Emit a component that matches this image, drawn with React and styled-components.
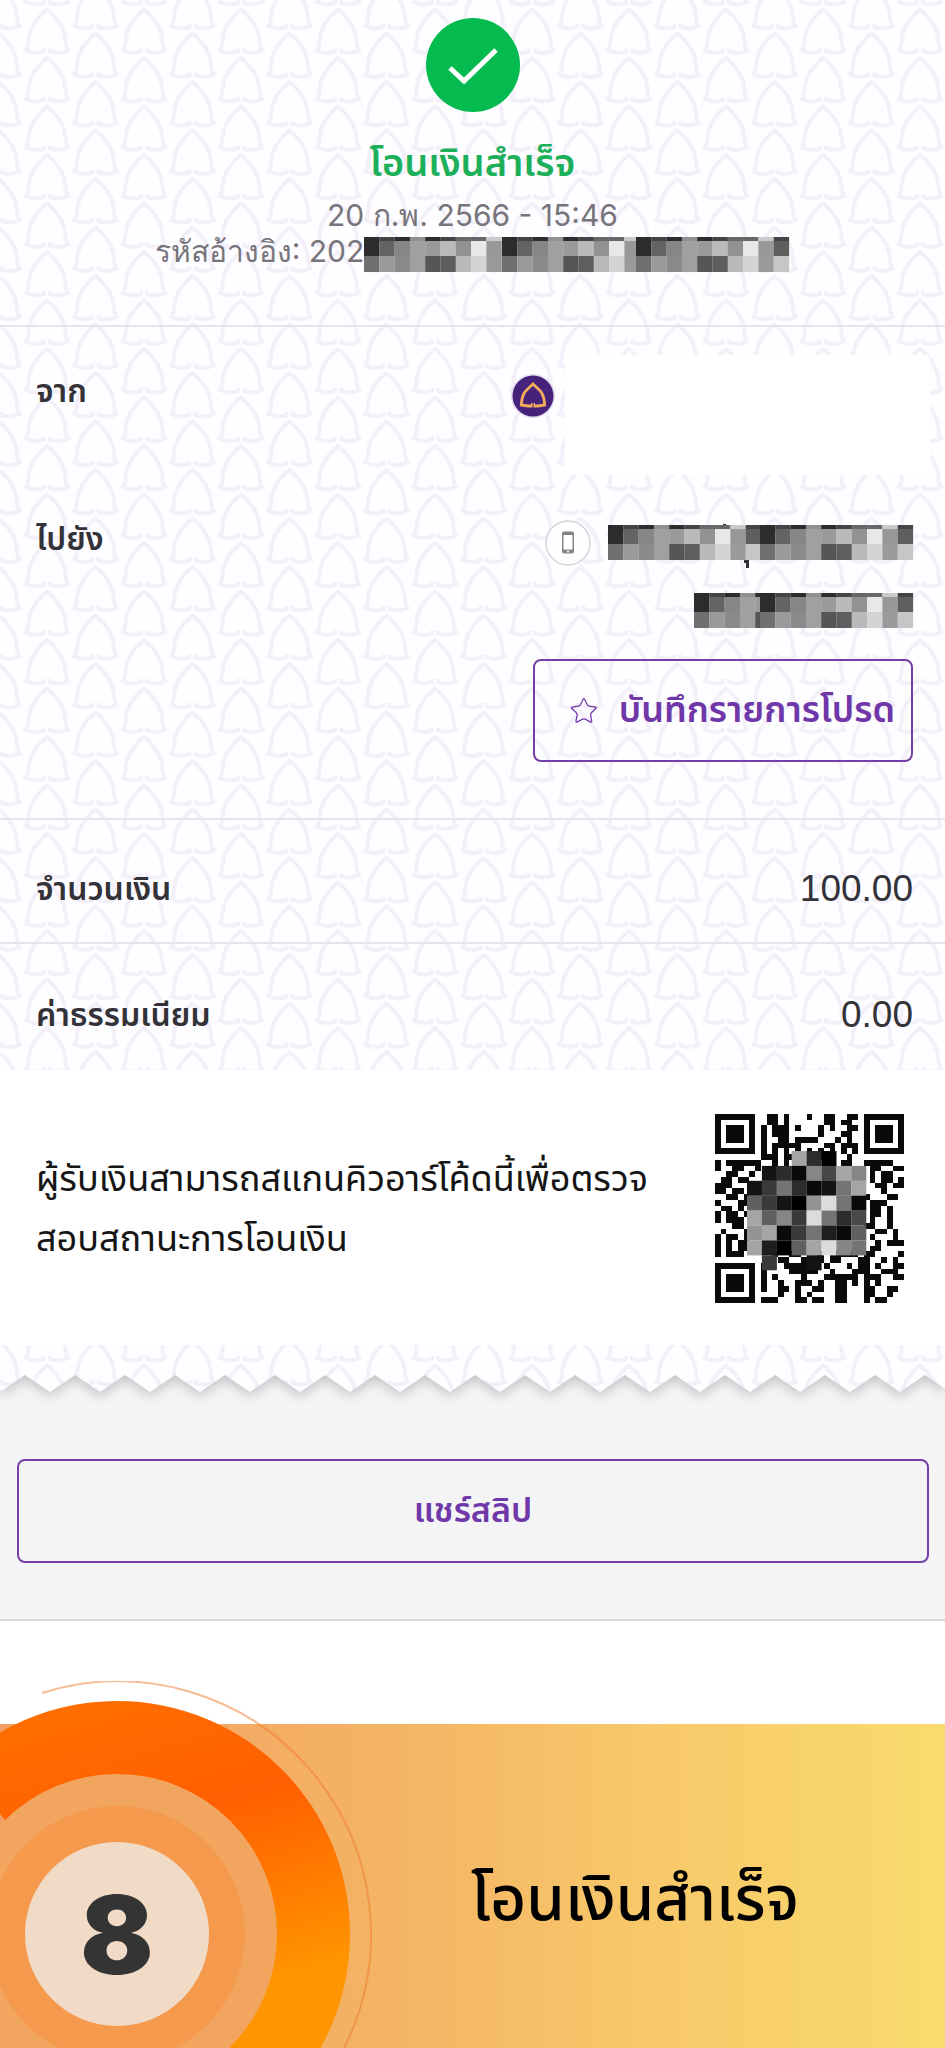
import React from "react";
import styled, { createGlobalStyle } from "styled-components";
import { Star } from "lucide-react";

const MOSAIC_TOP = ["#2c", "#44", "#2c", "#90", "#2c", "#44", "#68", "#68", "#ca", "#44"];
const MOSAIC_MID = ["#2c", "#64", "#86", "#a0", "#9a", "#ba", "#92", "#e8", "#98", "#5e"];
const MOSAIC_LOW = ["#70", "#9a", "#8a", "#a0", "#56", "#5e", "#ba", "#d4", "#9a", "#c6"];

const QR_ROWS = [
  "111111100110100010011001101111111",
  "100000100110100000011011001000001",
  "101110101011101000101001101011101",
  "101110101011100000100011001011101",
  "101110101001101111000101001011101",
  "100000101011111000011011101000001",
  "111111101010101010101010101111111",
  "000000001110110000100001000000000",
  "101111110010100000000011001111100",
  "100110010000000000000000000110011",
  "001100100000000000000000000101100",
  "011011000000000000000000000101101",
  "111000000000000000000000000011011",
  "110110000000000000000000000001000",
  "001101000000000000000000001000110",
  "100011000000000000000000000111000",
  "011010000000000000000000000110100",
  "101101000000000000000000000110100",
  "101110000000000000000000000100100",
  "000110000000000000000000001100100",
  "010001000000000000000000000011010",
  "101101100000000000000000000100010",
  "101011000000000000000000000010111",
  "101011010000000000000000000110000",
  "101110000010011000101111101100001",
  "000000000001100111101100011001010",
  "111111101000111100010001011010011",
  "100000101000011111001000111001110",
  "101110101010000100011111101110011",
  "101110101001001110100110101010000",
  "101110101001101001100110001100110",
  "100000100001001010000110001100100",
  "111111101110001101100110001011000",
];

const QR_COVER = [
  [3, 0, "#a5"], [4, 0, "#2c"], [5, 0, "#00"],
  [1, 1, "#14"], [2, 1, "#2c"], [3, 1, "#0a"], [4, 1, "#86"], [5, 1, "#48"], [6, 1, "#a5"], [7, 1, "#86"],
  [0, 2, "#14"], [1, 2, "#3a"], [2, 2, "#74"], [3, 2, "#2c"], [4, 2, "#0a"], [5, 2, "#14"], [6, 2, "#74"], [7, 2, "#a5"],
  [0, 3, "#60"], [1, 3, "#3a"], [2, 3, "#14"], [3, 3, "#00"], [4, 3, "#94"], [5, 3, "#dc"], [6, 3, "#74"], [7, 3, "#0a"],
  [0, 4, "#a5"], [1, 4, "#60"], [2, 4, "#86"], [3, 4, "#3a"], [4, 4, "#dc"], [5, 4, "#74"], [6, 4, "#2c"], [7, 4, "#4a"],
  [0, 5, "#94"], [1, 5, "#a5"], [2, 5, "#0a"], [3, 5, "#3a"], [4, 5, "#74"], [5, 5, "#1e"], [6, 5, "#0a"], [7, 5, "#60"],
  [0, 6, "#a5"], [1, 6, "#1e"], [2, 6, "#00"], [3, 6, "#60"], [4, 6, "#a5"], [5, 6, "#dc"], [6, 6, "#86"], [7, 6, "#74"],
  [1, 7, "#3a"], [4, 7, "#14"],
];

const grey = (shade) => shade + shade.slice(1) + shade.slice(1);

const Mosaic = ({ width, runs, label, mark }) => {
  return (
    <MosaicSvg width={width} height="35" viewBox={`0 0 ${width} 35`} role="img" aria-label={label}>
      {runs.map(([start, count]) =>
        Array.from({ length: count }, (_, i) => (
          <g key={`${start}-${i}`} transform={`translate(${start + i * 15.3} 0)`}>
            <rect width="15.4" height="5" fill={grey(MOSAIC_TOP[i])} />
            <rect y="4" width="15.4" height="16" fill={grey(MOSAIC_MID[i])} />
            <rect y="19" width="15.4" height="16" fill={grey(MOSAIC_LOW[i])} />
          </g>
        ))
      )}
      {mark && <path d="M136 35h5v8h-3v-5h-2zM115 -1h3v1h-3z" fill="#2f2f33" />}
    </MosaicSvg>
  );
};

const QrCode = () => {
  return (
    <QrSvg viewBox="0 0 189 189" role="img" aria-label="คิวอาร์โค้ด">
      <g transform="scale(5.727)" shapeRendering="crispEdges">
        {QR_ROWS.map((row, y) =>
          [...row].map((cell, x) =>
            cell === "1" ? <rect key={`${x}-${y}`} x={x} y={y} width="1" height="1" fill="#0a0a0a" /> : null
          )
        )}
      </g>
      {QR_COVER.map(([x, y, shade]) => (
        <rect
          key={`${x}-${y}`}
          x={32 + x * 14.9}
          y={37 + y * 14.9}
          width="15"
          height="15"
          fill={grey(shade)}
        />
      ))}
    </QrSvg>
  );
};

const BankLogo = () => {
  return (
    <BankSvg width="46" height="46" viewBox="0 0 46 46" role="img" aria-label="ธนาคาร">
      <circle cx="23" cy="23" r="22" fill="#e4dcf1" />
      <circle cx="23" cy="23" r="20.5" fill="#47227a" />
      <path
        d="M22.400 30V33H18L11.300 32C11.500 28 12.500 23 14.500 19.500C16.500 16.500 20 14 23 11C26 14 29.500 16.500 31.500 19.500C33.500 23 34.500 28 34.700 32L28 33H23.600V30"
        fill="none"
        stroke="#f3ab5c"
        strokeWidth="2.800"
      />
      <path d="M23 29V35" stroke="#47227a" strokeWidth="1" />
    </BankSvg>
  );
};

const PhoneIcon = () => {
  return (
    <PhoneSvg width="46" height="46" viewBox="0 0 46 46" role="img" aria-label="โทรศัพท์">
      <circle cx="23" cy="23" r="22" fill="#fefdff" stroke="#d6d4d9" strokeWidth="1.500" />
      <rect x="17" y="11.500" width="12" height="22" rx="2" fill="#858388" />
      <rect x="18.500" y="15" width="9" height="14.500" fill="#fff" />
      <circle cx="23" cy="31.500" r="1" fill="#fff" />
    </PhoneSvg>
  );
};

const StepRings = () => {
  return (
    <RingsSvg width="372" height="367" viewBox="0 0 372 367" aria-hidden="true">
      <defs>
        <linearGradient id="ring" gradientUnits="userSpaceOnUse" x1="60" y1="34" x2="152" y2="340">
          <stop offset="0" stopColor="#ff6d00" />
          <stop offset="0.400" stopColor="#ff5f00" />
          <stop offset="1" stopColor="#ff9500" />
        </linearGradient>
      </defs>
      <circle cx="117" cy="253" r="162" fill="#f2a55f" />
      <circle cx="117" cy="253" r="128" fill="#f5994d" />
      <path
        d="M-70 114A233 233 0 0 1 117 20A233 233 0 0 1 350 253A233 233 0 0 1 282 418L230 366A160 160 0 0 0 277 253A160 160 0 0 0 117 93A160 160 0 0 0 5 139L-20 108Z"
        fill="url(#ring)"
      />
      <path
        d="M42 12A253 253 0 0 1 344 367"
        fill="none"
        stroke="#f27a2a"
        strokeOpacity="0.500"
        strokeWidth="2"
      />
    </RingsSvg>
  );
};

const App = () => {
  return (
    <>
      <GlobalStyle />
      <Page>
        <Slip>
          <Header>
            <SuccessMark viewBox="0 0 94 94" aria-hidden="true">
              <circle cx="47" cy="47" r="47" fill="#05bb4f" />
              <path d="M24 50L38 63L70 32" fill="none" stroke="#fff" strokeWidth="5" />
            </SuccessMark>
            <Title>โอนเงินสำเร็จ</Title>
            <Meta>20 ก.พ. 2566 - 15:46</Meta>
            <Meta>
              รหัสอ้างอิง: 202
              <Mosaic width={426} runs={[[0, 9], [138, 9], [272, 10]]} label="รหัสอ้างอิง" />
            </Meta>
          </Header>
          <Transfer>
            <Party>
              <Label>จาก</Label>
              <BankLogo />
              <Blank />
            </Party>
            <Party $inset>
              <Label>ไปยัง</Label>
              <PhoneIcon />
              <Receiver>
                <Mosaic width={305} runs={[[0, 10], [152, 10]]} label="ชื่อผู้รับ" mark />
                <Mosaic width={219} runs={[[0, 5], [66, 10]]} label="หมายเลขผู้รับ" />
              </Receiver>
            </Party>
            <FavoriteButton type="button">
              <Star size={32} strokeWidth={1} />
              บันทึกรายการโปรด
            </FavoriteButton>
          </Transfer>
          <AmountRow>
            <Label>จำนวนเงิน</Label>
            <Amount>100.00</Amount>
          </AmountRow>
          <AmountRow>
            <Label>ค่าธรรมเนียม</Label>
            <Amount>0.00</Amount>
          </AmountRow>
        </Slip>
        <QrSection>
          <QrText>
            ผู้รับเงินสามารถสแกนคิวอาร์โค้ดนี้เพื่อตรวจ
            <br />
            สอบสถานะการโอนเงิน
          </QrText>
          <QrCode />
        </QrSection>
        <Footer>
          <TearShadow>
            <TearEdge />
          </TearShadow>
          <ShareButton type="button">แชร์สลิป</ShareButton>
        </Footer>
        <StepBand>
          <StepRings />
          <StepNumber>8</StepNumber>
          <StepTitle>โอนเงินสำเร็จ</StepTitle>
        </StepBand>
      </Page>
    </>
  );
};

export default App;

const leaf = (x, y) =>
  `<path transform='translate(${x} ${y})' d='M-3 40v3C-9 45 -15 45 -21 42C-18 38 -19 34 -18 29C-17 23 -15 18 -12 14C-9 9 -5 5 0 1C5 5 9 9 12 14C15 18 17 23 18 29C19 34 18 38 21 42C15 45 9 45 3 43v-3'/>`;

const leafTile = `url("data:image/svg+xml,${encodeURIComponent(
  `<svg xmlns='http://www.w3.org/2000/svg' width='97' height='97'><g fill='none' stroke='#f4f0fa' stroke-width='4'>${[
    [24, -40],
    [24, 8.5],
    [24, 57],
    [72.5, -16],
    [72.5, 32.5],
    [72.5, 81],
  ]
    .map(([x, y]) => leaf(x, y))
    .join("")}</g></svg>`
)}")`;

const toothMask = `url("data:image/svg+xml,${encodeURIComponent(
  "<svg xmlns='http://www.w3.org/2000/svg' width='50' height='47'><path d='M0 0H50V47L25 30L0 47Z'/></svg>"
)}")`;

const GlobalStyle = createGlobalStyle`
  * {
    box-sizing: border-box;
  }

  body {
    margin: 0;
    background: #fff;
    font-family: "Liberation Sans", "Noto Sans Thai", "Noto Sans", sans-serif;
  }
`;

const Page = styled.main`
  display: flex;
  flex-direction: column;
  overflow: hidden;
`;

const Slip = styled.section`
  display: flex;
  flex-direction: column;
  background: #fefdff ${leafTile} 23px 0;
`;

const Header = styled.header`
  display: flex;
  flex-direction: column;
  align-items: center;
  height: 327px;
  padding-top: 18px;
  border-bottom: 2px solid #e6e4ea;
`;

const SuccessMark = styled.svg`
  flex: none;
  width: 94px;
  height: 94px;
`;

const Title = styled.h1`
  margin: 21px 0 4px;
  color: #1cb05a;
  font-size: 38px;
  font-weight: 600;
  line-height: 60px;
`;

const Meta = styled.div`
  display: flex;
  align-items: center;
  height: 36px;
  color: #77757c;
  font-family: Inter, sans-serif;
  font-size: 30px;
  line-height: 36px;
  white-space: nowrap;

  svg {
    margin-top: 6px;
  }
`;

const MosaicSvg = styled.svg`
  display: block;
  flex: none;
  overflow: visible;
`;

const Transfer = styled.div`
  display: flex;
  flex-direction: column;
  height: 493px;
  padding: 28px 0 56px 36px;
  border-bottom: 2px solid #e6e4ea;
`;

const Party = styled.div`
  display: flex;
  align-items: flex-start;
  padding-right: ${(props) => (props.$inset ? "32px" : "15px")};
  margin-bottom: ${(props) => (props.$inset ? "31px" : "28px")};
`;

const Label = styled.span`
  flex: 1;
  padding-top: 12px;
  color: #333238;
  font-size: 32px;
  font-weight: 600;
  line-height: 48px;
`;

const BankSvg = styled.svg`
  margin: 18px 9px 0 0;
`;

const Blank = styled.div`
  width: 365px;
  height: 120px;
  border-radius: 4px;
  background: #fff;
`;

const PhoneSvg = styled.svg`
  margin: 17px 17px 0 0;
`;

const Receiver = styled.div`
  display: flex;
  flex-direction: column;
  align-items: flex-end;
  gap: 33px;
  padding-top: 22px;
`;

const OutlineButton = styled.button`
  display: flex;
  align-items: center;
  justify-content: center;
  height: 104px;
  border: 2px solid #7440a5;
  border-radius: 8px;
  background: transparent;
  color: #6f37a8;
  font-family: inherit;
  font-size: 34px;
  font-weight: 600;
  white-space: nowrap;
`;

const FavoriteButton = styled(OutlineButton)`
  align-self: flex-end;
  gap: 20px;
  width: 380px;
  margin-right: 32px;
  padding: 0 16px 0 34px;
  font-size: 36px;
`;

const AmountRow = styled.div`
  display: flex;
  align-items: center;
  height: 122px;
  padding: 4px 32px 0 36px;

  & + & {
    border-top: 2px solid #e6e4ea;
    height: 128px;
  }
`;

const Amount = styled.span`
  padding-top: 12px;
  color: #333238;
  font-size: 37px;
  line-height: 48px;
`;

const QrSection = styled.section`
  display: flex;
  align-items: center;
  justify-content: space-between;
  height: 275px;
  padding: 2px 41px 0 36px;
  background: #fff;
`;

const QrText = styled.p`
  margin: 0;
  color: #151515;
  font-size: 36px;
  line-height: 60px;
  white-space: nowrap;
`;

const QrSvg = styled.svg`
  flex: none;
  width: 189px;
  height: 189px;
`;

const Footer = styled.footer`
  display: flex;
  flex-direction: column;
  overflow: hidden;
  padding-bottom: 56px;
  border-bottom: 2px solid #d9d7dd;
  background: #f4f4f7;
`;

const TearShadow = styled.div`
  margin-bottom: 67px;
  filter: drop-shadow(0 4px 6px rgba(0, 0, 0, 0.2));
`;

const TearEdge = styled.div`
  height: 47px;
  background: #fefdff ${leafTile} 23px 11px;
  mask: ${toothMask} repeat-x;
`;

const ShareButton = styled(OutlineButton)`
  margin: 0 16px 0 17px;
`;

const StepBand = styled.section`
  position: relative;
  display: flex;
  align-items: center;
  justify-content: center;
  height: 324px;
  margin-top: 103px;
  padding: 26px 0 0 325px;
  background: linear-gradient(90deg, #f29e62 0%, #f4b465 42%, #f8c96a 70%, #f8db6d 100%);
`;

const RingsSvg = styled.svg`
  position: absolute;
  bottom: 0;
  left: 0;
`;

const StepNumber = styled.div`
  position: absolute;
  bottom: 22px;
  left: 25px;
  display: flex;
  align-items: center;
  justify-content: center;
  width: 184px;
  height: 184px;
  border-radius: 50%;
  background: #f1dac6;
  color: #343434;
  font-family: Inter, sans-serif;
  font-size: 108px;
  font-weight: 900;
`;

const StepTitle = styled.h2`
  margin: 0;
  color: #000;
  font-size: 62px;
  font-weight: 500;
  line-height: 96px;
`;
